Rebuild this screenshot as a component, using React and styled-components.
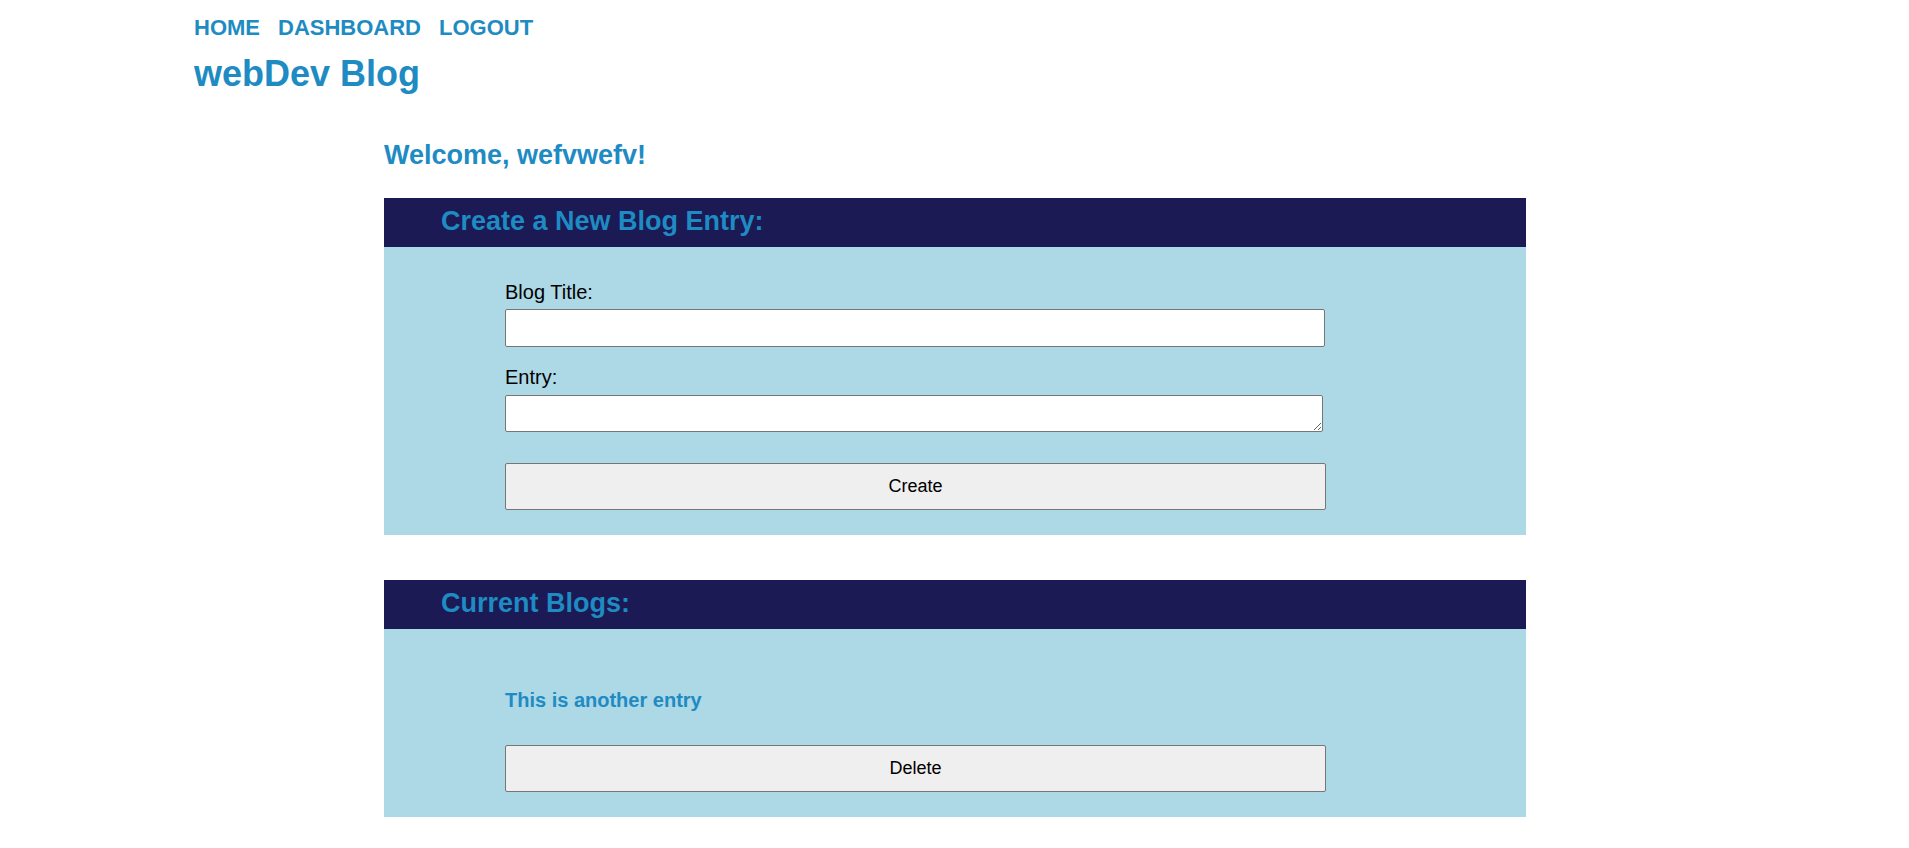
import React from "react";
import styled, { createGlobalStyle } from "styled-components";

const Global = createGlobalStyle`
  html, body { margin: 0; padding: 0; background: #ffffff; }
  body { font-family: "Liberation Sans", Arial, sans-serif; color: #000; }
  * { box-sizing: border-box; }
`;

const BLUE = "#1e8bc3";

const Page = styled.div`
  display: flex;
  flex-direction: column;
`;

const SiteHeader = styled.header`
  display: flex;
  flex-direction: column;
  padding: 15px 0 0 194px;
`;

const Nav = styled.nav`
  display: flex;
  gap: 18px;
`;

const NavLink = styled.a`
  color: ${BLUE};
  font-weight: bold;
  font-size: 22px;
  line-height: 25px;
  text-decoration: none;
`;

const SiteTitle = styled.h1`
  margin: 13px 0 0;
  color: ${BLUE};
  font-size: 36px;
  line-height: 41px;
  font-weight: bold;
`;

const Main = styled.main`
  width: 1142px;
  margin: 0 0 0 384px;
  display: flex;
  flex-direction: column;
`;

const Welcome = styled.h2`
  margin: 46px 0 27px;
  color: ${BLUE};
  font-size: 27px;
  line-height: 31px;
  font-weight: bold;
`;

const Panel = styled.section`
  background: #add8e6;
  margin-bottom: ${(p) => p.$gap || 0}px;
`;

const PanelHeader = styled.h2`
  margin: 0;
  background: #1b1a54;
  color: ${BLUE};
  font-size: 27px;
  line-height: 31px;
  font-weight: bold;
  padding: 8px 0 10px 57px;
`;

const PanelBody = styled.div`
  display: flex;
  flex-direction: column;
  padding: ${(p) => p.$top}px 0 25px 121px;
`;

const Label = styled.label`
  display: block;
  font-size: 20px;
  line-height: 23px;
  color: #000;
  margin-top: ${(p) => p.$top || 0}px;
`;

const TextInput = styled.input`
  display: block;
  width: 820px;
  height: 38px;
  margin: 5px 0 0;
  border: 1px solid #767676;
  border-radius: 2px;
  background: #fff;
  font-family: inherit;
  font-size: 16px;
  padding: 1px 4px;
`;

const TextArea = styled.textarea`
  display: block;
  width: 818px;
  height: 37px;
  margin: 6px 0 0;
  border: 1px solid #767676;
  border-radius: 2px;
  background: #fff;
  font-family: inherit;
  font-size: 16px;
  padding: 2px 4px;
`;

const Button = styled.button`
  display: block;
  width: 821px;
  height: 47px;
  margin: ${(p) => p.$top}px 0 0;
  background: #efefef;
  border: 1px solid #767676;
  border-radius: 2px;
  font-family: "Liberation Sans", Arial, sans-serif;
  font-size: 18px;
  color: #000;
  cursor: pointer;
`;

const EntryTitle = styled.h4`
  margin: 0;
  color: ${BLUE};
  font-size: 20px;
  line-height: 23px;
  font-weight: bold;
`;

export default function App() {
  return (
    <Page>
      <Global />
      <SiteHeader>
        <Nav>
          <NavLink href="#">HOME</NavLink>
          <NavLink href="#">DASHBOARD</NavLink>
          <NavLink href="#">LOGOUT</NavLink>
        </Nav>
        <SiteTitle>webDev Blog</SiteTitle>
      </SiteHeader>
      <Main>
        <Welcome>Welcome, wefvwefv!</Welcome>
        <Panel $gap={45}>
          <PanelHeader>Create a New Blog Entry:</PanelHeader>
          <PanelBody $top={34}>
            <Label htmlFor="blog-title">Blog Title:</Label>
            <TextInput id="blog-title" type="text" />
            <Label htmlFor="blog-entry" $top={19}>Entry:</Label>
            <TextArea id="blog-entry" />
            <Button $top={31}>Create</Button>
          </PanelBody>
        </Panel>
        <Panel>
          <PanelHeader>Current Blogs:</PanelHeader>
          <PanelBody $top={60}>
            <EntryTitle>This is another entry</EntryTitle>
            <Button $top={33}>Delete</Button>
          </PanelBody>
        </Panel>
      </Main>
    </Page>
  );
}
